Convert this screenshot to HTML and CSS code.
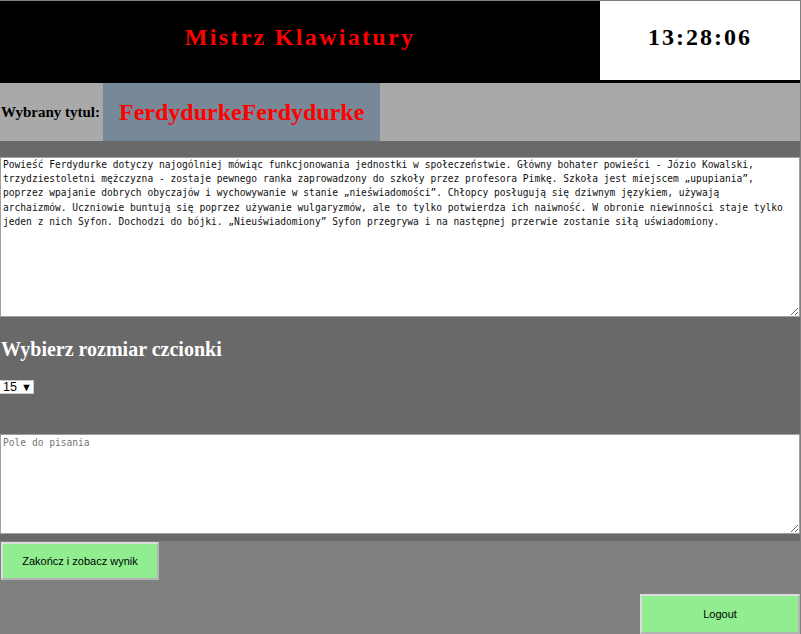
FILE: index.html
```html
<!DOCTYPE html>
<html lang="pl">
<head>
<meta charset="utf-8">
<title>Mistrz Klawiatury</title>
<link rel="stylesheet" href="styles.css">
</head>
<body>
<header class="top">
  <div class="brand"><h1 class="brand-title">Mistrz Klawiatury</h1></div>
  <div class="clock">13:28:06</div>
</header>
<div class="chosen">
  <span class="chosen-label">Wybrany tytul:</span>
  <span class="chosen-title">FerdydurkeFerdydurke</span>
</div>
<main class="work">
  <textarea class="source" readonly>Powieść Ferdydurke dotyczy najogólniej mówiąc funkcjonowania jednostki w społeczeństwie. Główny bohater powieści - Józio Kowalski, trzydziestoletni mężczyzna - zostaje pewnego ranka zaprowadzony do szkoły przez profesora Pimkę. Szkoła jest miejscem „upupiania”, poprzez wpajanie dobrych obyczajów i wychowywanie w stanie „nieświadomości”. Chłopcy posługują się dziwnym językiem, używają archaizmów. Uczniowie buntują się poprzez używanie wulgaryzmów, ale to tylko potwierdza ich naiwność. W obronie niewinności staje tylko jeden z nich Syfon. Dochodzi do bójki. „Nieuświadomiony” Syfon przegrywa i na następnej przerwie zostanie siłą uświadomiony.</textarea>
  <h2 class="size-heading">Wybierz rozmiar czcionki</h2>
  <div class="size-row">
    <span class="size-select"><select class="size-native"><option>15</option></select><span class="size-arrow">▼</span></span>
  </div>
  <textarea class="typing" placeholder="Pole do pisania"></textarea>
</main>
<div class="actions">
  <button class="btn btn-finish" type="button">Zakończ i zobacz wynik</button>
  <button class="btn btn-logout" type="button">Logout</button>
</div>
</body>
</html>
```

FILE: styles.css
```css
html {
  background: #808080;
  height: 100%;
}
body {
  margin: 1px 1px 0 0;
  width: 800px;
  font-family: "Liberation Serif", "Times New Roman", serif;
}
.top {
  display: flex;
  height: 82px;
  background: #000;
}
.brand {
  width: 600px;
  display: flex;
  justify-content: center;
  align-items: flex-start;
  padding-top: 23px;
  box-sizing: border-box;
}
.brand-title {
  margin: 0;
  font-size: 24px;
  font-weight: bold;
  letter-spacing: 2.3px;
  color: #ff0000;
  line-height: normal;
}
.clock {
  width: 200px;
  height: 79px;
  background: #fff;
  text-align: center;
  box-sizing: border-box;
  padding-top: 23px;
  font-size: 24px;
  font-weight: bold;
  letter-spacing: 2px;
  color: #000;
}
.chosen {
  display: flex;
  align-items: center;
  height: 58px;
  background: #a9a9a9;
}
.chosen-label {
  font-size: 15px;
  font-weight: bold;
  color: #000;
  padding-left: 1px;
}
.chosen-title {
  margin-left: 3px;
  height: 58px;
  line-height: 58px;
  padding: 0 16px;
  background: #778899;
  color: #ff0000;
  font-size: 24px;
  font-weight: bold;
}
.work {
  background: #696969;
  padding: 16px 0 7px;
  display: flex;
  flex-direction: column;
}
.source,
.typing {
  display: block;
  width: 800px;
  box-sizing: border-box;
  margin: 0;
  border: 1px solid #a0a0a0;
  background: #fff;
  font-family: "DejaVu Sans Mono", "Liberation Mono", monospace;
  font-size: 9.6px;
  line-height: 14.2px;
  color: #111;
  padding: 0 13px 2px 2px;
}
.source {
  height: 160px;
}
.typing {
  height: 100px;
  padding-top: 1px;
}
.typing::placeholder {
  color: #757575;
}
.size-heading {
  margin: 21px 0 0;
  font-size: 20px;
  font-weight: bold;
  color: #fff;
  line-height: 23px;
  padding-left: 1px;
}
.size-row {
  margin-top: 19px;
  margin-bottom: 40px;
  display: flex;
}
.size-select {
  display: inline-flex;
  align-items: center;
  width: 34px;
  height: 14px;
  box-sizing: border-box;
  background: #fff;
  border: 1px solid #c8c8c8;
  border-left-color: #fff;
  font-family: "Liberation Sans", Arial, sans-serif;
  font-size: 12px;
}
.size-native {
  appearance: none;
  -webkit-appearance: none;
  border: 0;
  background: transparent;
  margin: 0;
  padding: 0 0 0 2px;
  width: 20px;
  height: 12px;
  font-family: "Liberation Sans", Arial, sans-serif;
  font-size: 12.5px;
  line-height: 12px;
  color: #000;
}
.size-arrow {
  font-size: 11px;
  color: #000;
  line-height: 12px;
}
.actions {
  display: flex;
  flex-direction: column;
  align-items: flex-start;
}
.btn {
  font-family: "Liberation Sans", Arial, sans-serif;
  font-size: 11px;
  color: #000;
  background: #90ee90;
  border-style: solid;
  border-width: 2px;
  border-color: #dcdcdc #b4b4b4 #b4b4b4 #dcdcdc;
  padding: 0;
  box-sizing: border-box;
  cursor: pointer;
}
.btn-finish {
  width: 158px;
  height: 38px;
  margin: 1px 0 0 1px;
}
.btn-logout {
  width: 160px;
  height: 40px;
  margin-top: 14px;
  align-self: flex-end;
}
```
